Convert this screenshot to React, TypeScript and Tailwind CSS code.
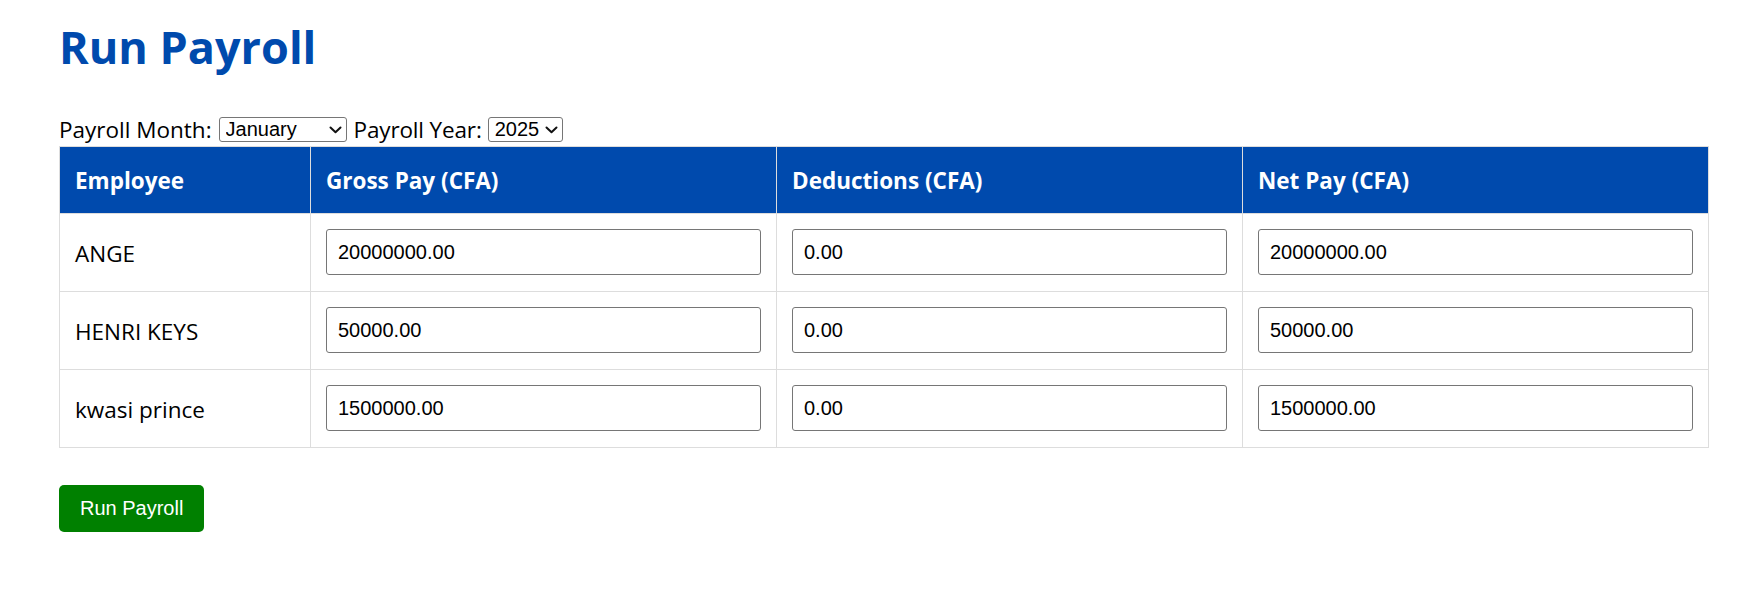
import React from "react";

const rows = [
  { name: "ANGE", gross: "20000000.00", deductions: "0.00", net: "20000000.00" },
  { name: "HENRI KEYS", gross: "50000.00", deductions: "0.00", net: "50000.00" },
  { name: "kwasi prince", gross: "1500000.00", deductions: "0.00", net: "1500000.00" },
];

const Chevron = () => (
  <svg width="13" height="8" viewBox="0 0 13 8" fill="none">
    <path d="M1.5 1.5 L6.5 6.2 L11.5 1.5" stroke="#111" strokeWidth="2" strokeLinecap="round" strokeLinejoin="round" />
  </svg>
);

const Select = ({ width, value, options }: { width: string; value: string; options: string[] }) => (
  <div className={`relative ${width} h-[25px]`}>
    <select
      defaultValue={value}
      className="block appearance-none w-full h-full border border-[#767676] rounded-[3px] bg-white pl-[6px] pr-[20px] text-[20px] leading-[23px] text-black font-['Liberation_Sans',Arial,sans-serif]"
    >
      {options.map((o) => (
        <option key={o}>{o}</option>
      ))}
    </select>
    <span className="pointer-events-none absolute right-[5px] top-[9px] flex">
      <Chevron />
    </span>
  </div>
);

const Cell = ({ value }: { value: string }) => (
  <td className="border border-[#dddddd] px-[15px] pt-[15px] pb-[16px] align-middle">
    <input
      type="text"
      defaultValue={value}
      className="block w-full h-[46px] border border-[#767676] rounded-[3px] px-[11px] text-[20px] text-black bg-white font-['Liberation_Sans',Arial,sans-serif]"
    />
  </td>
);

const App = () => {
  const months = [
    "January", "February", "March", "April", "May", "June",
    "July", "August", "September", "October", "November", "December",
  ];
  return (
    <div className="min-h-screen bg-white pl-[59px] pt-[17px] text-black font-['Open_Sans',sans-serif]">
      <h1 className="text-[45px] leading-[60px] font-bold text-[#004aad]">Run Payroll</h1>

      <div className="mt-[36px] h-[33px] flex items-center text-[22.5px] leading-[33px]">
        <span>Payroll Month:</span>
        <div className="ml-[7px] mr-[7px]">
          <Select width="w-[128px]" value="January" options={months} />
        </div>
        <span className="tracking-[-0.15px]">Payroll Year:</span>
        <div className="ml-[6px]">
          <Select width="w-[75px]" value="2025" options={["2024", "2025", "2026"]} />
        </div>
      </div>

      <table className="table-fixed border-collapse w-[1649px] text-[22.5px]">
        <colgroup>
          <col className="w-[251px]" />
          <col className="w-[466px]" />
          <col className="w-[466px]" />
          <col className="w-[466px]" />
        </colgroup>
        <thead>
          <tr className="bg-[#004aad] text-white">
            {["Employee", "Gross Pay (CFA)", "Deductions (CFA)", "Net Pay (CFA)"].map((h) => (
              <th
                key={h}
                className="border border-[#dddddd] px-[15px] pt-[16px] pb-[14px] text-left font-bold leading-[36px]"
              >
                {h}
              </th>
            ))}
          </tr>
        </thead>
        <tbody>
          {rows.map((r) => (
            <tr key={r.name}>
              <td className="border border-[#dddddd] px-[15px] pt-[17px] pb-[14px] align-middle leading-[30px]">
                {r.name}
              </td>
              <Cell value={r.gross} />
              <Cell value={r.deductions} />
              <Cell value={r.net} />
            </tr>
          ))}
        </tbody>
      </table>

      <button className="mt-[37px] h-[47px] px-[21px] rounded-[5px] bg-[#008000] text-white text-[20px] leading-[23px] font-['Liberation_Sans',Arial,sans-serif]">
        Run Payroll
      </button>
    </div>
  );
};

export default App;
